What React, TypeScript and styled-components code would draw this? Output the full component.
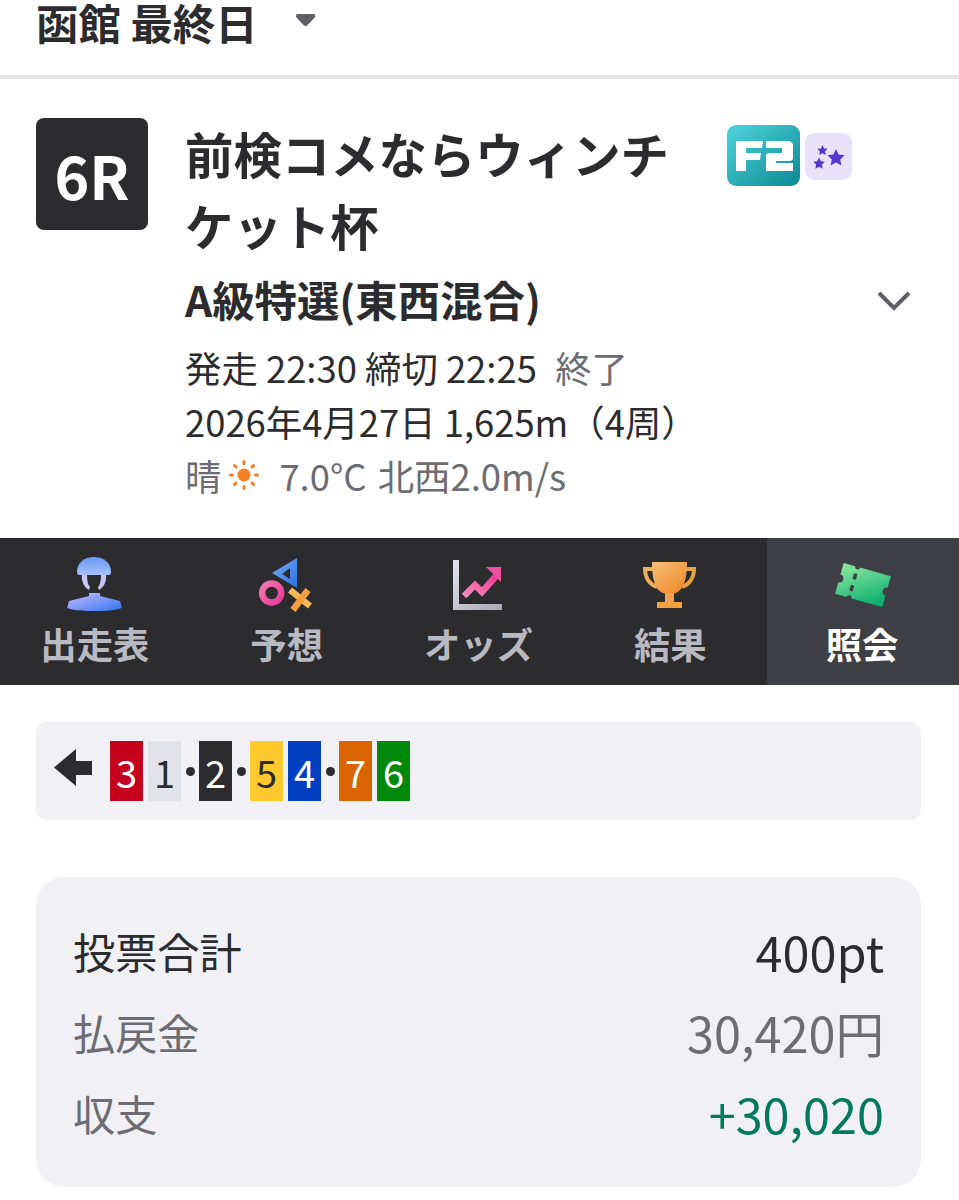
import React from 'react'
import styled, { createGlobalStyle } from 'styled-components'

const GlobalStyle = createGlobalStyle`
	html, body {
		margin: 0;
		padding: 0;
		background: #fff;
		color: #2c2c2e;
		font-family: "Noto Sans CJK JP", "Noto Sans", sans-serif;
		overflow: hidden;
	}
`
const Page = styled.div`
	width: 959px;
	height: 1200px;
	overflow: hidden;
`
const Header = styled.header`
	height: 75px;
	box-sizing: content-box;
	border-bottom: 4px solid #e4e4ee;
	padding-left: 36px;
	display: flex;
	align-items: flex-start;
	gap: 38px;
`
const Venue = styled.h1`
	margin: 0;
	font-size: 42.4px;
	line-height: 44px;
	font-weight: 700;
`
const Caret = styled.span`
	width: 20px;
	height: 12px;
	margin: 14px 0 0 0;
	background: #5f5f66;
	clip-path: polygon(6% 0, 94% 0, 100% 20%, 58% 96%, 50% 100%, 42% 96%, 0 20%);
`
const Race = styled.section`
	height: 459px;
	box-sizing: border-box;
	padding: 39px 36px 0;
	display: flex;
	gap: 37px;
`
const RaceBadge = styled.div`
	flex: none;
	width: 112px;
	height: 112px;
	border-radius: 8px;
	background: #2c2c2e;
	color: #fff;
	font-size: 59px;
	font-weight: 700;
	display: flex;
	align-items: center;
	justify-content: center;
`
const RaceBody = styled.div`
	flex: 1;
	min-width: 0;
	position: relative;
`
const TitleRow = styled.div`
	display: flex;
	align-items: flex-start;
`
const Title = styled.h2`
	margin: -1px 0 1px;
	width: 522px;
	flex: none;
	font-size: 48.4px;
	line-height: 72px;
	font-weight: 700;
`
const Grades = styled.div`
	display: flex;
	align-items: center;
	gap: 4px;
	margin: 7px 0 0 20px;
`
const GradeLine = styled.div`
	font-size: 42.4px;
	line-height: 66px;
	font-weight: 700;
	margin-top: 4px;
`
const Chevron = styled.svg`
	position: absolute;
	right: 11px;
	top: 171px;
`
const Meta = styled.div<{ $muted?: boolean }>`
	font-size: 36.4px;
	line-height: 54px;
	color: ${p => (p.$muted ? '#6c6c72' : '#2c2c2e')};
	white-space: pre;
	display: flex;
	align-items: center;
	word-spacing: ${p => (p.$muted ? '3px' : '0')};
`
const MetaFirst = styled(Meta)`
	margin-top: 8px;
`
const Muted = styled.span`
	color: #6c6c72;
	margin-left: 2px;
`
const SunIcon = styled.svg`
	margin: 0 19px 0 7px;
`
const Tabs = styled.nav`
	height: 147px;
	background: #2c2c2e;
	display: grid;
	grid-template-columns: repeat(5, 1fr);
`
const Tab = styled.div<{ $active?: boolean }>`
	background: ${p => (p.$active ? '#3f4045' : 'transparent')};
	color: ${p => (p.$active ? '#fff' : '#b9b9c1')};
	display: flex;
	flex-direction: column;
	align-items: center;
	padding-top: 17px;
	box-sizing: border-box;
`
const TabIcon = styled.svg`
	display: block;
	width: 60px;
	height: 60px;
`
const TabLabel = styled.span`
	font-size: 36.4px;
	line-height: 44px;
	font-weight: 700;
	margin-top: 6px;
	margin-left: -2px;
`
const Order = styled.div`
	margin: 37px 38px 0 36px;
	height: 98px;
	border-radius: 10px;
	background: #f0f0f5;
	display: flex;
	align-items: center;
	padding-left: 18px;
`
const ArrowIcon = styled.svg`
	margin-right: 18px;
	margin-bottom: 7px;
`
const Bike = styled.span<{ $bg: string; $fg: string }>`
	width: 33px;
	height: 60px;
	margin-right: 5px;
	background: ${p => p.$bg};
	color: ${p => p.$fg};
	font-size: 38px;
	display: flex;
	align-items: center;
	justify-content: center;
`
const Dot = styled.span`
	width: 9px;
	height: 9px;
	border-radius: 50%;
	background: #2c2c2e;
	margin-right: 4px;
`
const Totals = styled.section`
	margin: 57px 38px 0 36px;
	height: 310px;
	box-sizing: border-box;
	border-radius: 28px;
	background: #f0f0f5;
	padding: 36px 37px 0 38px;
`
const TotalRow = styled.div<{ $color: string }>`
	display: flex;
	justify-content: space-between;
	align-items: center;
	height: 81px;
	color: ${p => p.$color};
`
const TotalLabel = styled.span`
	font-size: 42.2px;
	line-height: 62px;
	margin-left: -1px;
	margin-top: -6px;
`
const TotalValue = styled.span<{ $color?: string }>`
	font-size: 48.6px;
	line-height: 70px;
	margin-top: -6px;
	color: ${p => p.$color || 'inherit'};
`

const order: ({ n: string; bg: string; fg: string } | 'dot')[] = [
	{ n: '3', bg: '#c4001c', fg: '#fff' },
	{ n: '1', bg: '#e2e3e8', fg: '#2c2c2e' },
	'dot',
	{ n: '2', bg: '#2c2c2e', fg: '#fff' },
	'dot',
	{ n: '5', bg: '#ffc92e', fg: '#2c2c2e' },
	{ n: '4', bg: '#0040c0', fg: '#fff' },
	'dot',
	{ n: '7', bg: '#d96400', fg: '#fff' },
	{ n: '6', bg: '#008a0c', fg: '#fff' },
]

const F2Logo = () => (
	<svg width="74" height="62" viewBox="0 0 74 62">
		<defs>
			<linearGradient id="f2" x1="0" y1="0" x2="1" y2="1">
				<stop offset="0" stopColor="#4fd3dc" />
				<stop offset="1" stopColor="#0b8a94" />
			</linearGradient>
		</defs>
		<rect width="73" height="61" rx="9" fill="url(#f2)" />
		<path d="M9 16h27l-1 7H19v5h15l-1 7H19v11H9z" fill="#fff" />
		<path d="M39 16h24l3 3v15l-2 2H49v2h17v8H39V30l2-2h14v-5H39z" fill="#fff" />
	</svg>
)

const Stars = () => (
	<svg width="47" height="47" viewBox="0 0 47 47">
		<rect width="47" height="47" rx="9" fill="#e8e2fc" />
		<path d="M31 16l2.600 5.600 6 .7-4.400 4.100 1.200 6-5.400-3-5.400 3 1.200-6-4.400-4.100 6-.7z" fill="#5538d0" />
		<path d="M17.500 12l1.600 3.400 3.700.4-2.700 2.500.7 3.700-3.300-1.800-3.300 1.800.7-3.700-2.700-2.500 3.700-.4z" fill="#5538d0" />
		<path d="M14 24.500l1.800 3.800 4.100.5-3 2.800.8 4.100-3.700-2-3.700 2 .8-4.100-3-2.800 4.100-.5z" fill="#5538d0" />
	</svg>
)

const Sun = () => (
	<SunIcon width="32" height="32" viewBox="0 0 32 32">
		<circle cx="16" cy="16" r="6.500" fill="#f58024" />
		<g stroke="#f58024" strokeWidth="3" strokeLinecap="round">
			<path d="M16 2.500v2M16 27.500v2M2.500 16h2M27.500 16h2M6.500 6.500l1.500 1.500M24 24l1.500 1.500M6.500 25.500l1.500-1.500M24 8l1.500-1.500" />
		</g>
	</SunIcon>
)

const RiderIcon = () => (
	<TabIcon viewBox="0 0 60 60">
		<defs>
			<linearGradient id="rider" x1="0" y1="0" x2="1" y2="1">
				<stop offset="0" stopColor="#c9bcff" />
				<stop offset="1" stopColor="#2f74f0" />
			</linearGradient>
			<linearGradient id="helmet" x1="0" y1="0" x2="0" y2="1">
				<stop offset="0" stopColor="#6497f0" />
				<stop offset="1" stopColor="#a8c0ff" />
			</linearGradient>
		</defs>
		<path d="M11 17c0-9 7-15 17-15s17 6 17 15c0 2-1 3-2 3H13c-1 0-2-1-2-3z" fill="url(#helmet)" />
		<path d="M16 20c-1 7 3 13 7 15l1-3c-2-2-3-6-3-12zM40 20c1 7-3 13-7 15l-1-3c2-2 3-6 3-12z" fill="#c9c6f6" />
		<path d="M23 38h11v3l20 5 2 7c-9 3-18 3-27.500 3S10 56 1 53l2-7 20-5z" fill="url(#rider)" />
	</TabIcon>
)

const SymbolsIcon = () => (
	<TabIcon viewBox="0 0 60 60">
		<defs>
			<linearGradient id="tri" x1="0" y1="0" x2="1" y2="1">
				<stop offset="0" stopColor="#74b0f7" />
				<stop offset="1" stopColor="#2f6fe0" />
			</linearGradient>
			<linearGradient id="ring" x1="0" y1="0" x2="1" y2="1">
				<stop offset="0" stopColor="#f478b0" />
				<stop offset="1" stopColor="#e83a94" />
			</linearGradient>
		</defs>
		<path d="M39 3v30L14 18z M32 13l-8 6 8 5z" fill="url(#tri)" fillRule="evenodd" />
		<circle cx="13.700" cy="38" r="9.500" fill="none" stroke="url(#ring)" strokeWidth="6.500" />
		<path d="M32 35l20 16" stroke="#f5b858" strokeWidth="6.500" fill="none" />
		<path d="M50 35L35 55" stroke="#f5a040" strokeWidth="6.500" fill="none" />
	</TabIcon>
)

const ChartIcon = () => (
	<TabIcon viewBox="0 0 60 60">
		<defs>
			<linearGradient id="axis" x1="0" y1="0" x2="1" y2="1">
				<stop offset="0" stopColor="#e4e4ea" />
				<stop offset="1" stopColor="#a8a8b4" />
			</linearGradient>
			<linearGradient id="trend" x1="0" y1="1" x2="1" y2="0">
				<stop offset="0" stopColor="#f48cb8" />
				<stop offset="1" stopColor="#ee3f96" />
			</linearGradient>
		</defs>
		<path d="M4 5h6v44h43v6H4z" fill="url(#axis)" />
		<path d="M15 41l11-11 7 7 14-16" stroke="url(#trend)" strokeWidth="6.500" fill="none" />
		<path d="M37 12h15v15z" fill="#ee4f9e" />
	</TabIcon>
)

const TrophyIcon = () => (
	<TabIcon viewBox="0 0 60 60">
		<defs>
			<linearGradient id="cup" x1="0" y1="0" x2="1" y2="1">
				<stop offset="0" stopColor="#f8c078" />
				<stop offset="1" stopColor="#ee8424" />
			</linearGradient>
		</defs>
		<path d="M12 14H4c0 8 4 15 12 18" fill="none" stroke="#eeb058" strokeWidth="4" />
		<path d="M45 14h8c0 8-4 15-12 18" fill="none" stroke="#e8a044" strokeWidth="4" />
		<path d="M11 7h35c0 14-2 24-8 29-2 2-5 3-9.500 3s-8-1-10-3C13 31 11 21 11 7z" fill="url(#cup)" />
		<path d="M24 38h9v9h-9z" fill="#f3a050" />
		<path d="M16 47h25v6H16z" fill="#f3a040" />
	</TabIcon>
)

const TicketIcon = () => (
	<TabIcon viewBox="0 0 60 60">
		<defs>
			<linearGradient id="ticket" x1="0" y1="0" x2="1" y2="1">
				<stop offset="0" stopColor="#8fe9a0" />
				<stop offset="1" stopColor="#00a96c" />
			</linearGradient>
		</defs>
		<g transform="rotate(15.500 30 30)">
			<path d="M5.500 14H17.500a2.500 2.500 0 0 0 5 0h32v12a4 4 0 0 0 0 8v12H22.500a2.500 2.500 0 0 0-5 0H5.500V34a4 4 0 0 0 0-8z" fill="url(#ticket)" />
			<path d="M20 21v6M20 33v6" stroke="#3f4045" strokeWidth="3.500" />
		</g>
	</TabIcon>
)

const tabs = [
	{ label: '出走表', icon: <RiderIcon /> },
	{ label: '予想', icon: <SymbolsIcon /> },
	{ label: 'オッズ', icon: <ChartIcon /> },
	{ label: '結果', icon: <TrophyIcon /> },
	{ label: '照会', icon: <TicketIcon />, active: true },
]

const App: React.FC = () => {
	return (
		<Page>
			<GlobalStyle />
			<Header>
				<Venue>函館 最終日</Venue>
				<Caret />
			</Header>
			<Race>
				<RaceBadge>6R</RaceBadge>
				<RaceBody>
					<TitleRow>
						<Title>前検コメならウィンチケット杯</Title>
						<Grades>
							<F2Logo />
							<Stars />
						</Grades>
					</TitleRow>
					<GradeLine>A級特選(東西混合)</GradeLine>
					<Chevron width="36" height="24" viewBox="0 0 36 24" fill="none">
						<path d="M3 4l15 15L33 4" stroke="#5f5f66" strokeWidth="4" />
					</Chevron>
					<MetaFirst>
						発走 22:30 締切 22:25  <Muted>終了</Muted>
					</MetaFirst>
					<Meta>2026年4月27日 1,625m（4周）</Meta>
					<Meta $muted>
						晴
						<Sun />
						7.0°C 北西2.0m/s
					</Meta>
				</RaceBody>
			</Race>
			<Tabs>
				{tabs.map(tab => (
					<Tab key={tab.label} $active={tab.active}>
						{tab.icon}
						<TabLabel>{tab.label}</TabLabel>
					</Tab>
				))}
			</Tabs>
			<Order>
				<ArrowIcon width="38" height="37" viewBox="0 0 38 37">
					<path d="M0 18.500L22 0v12h16v14H22v11z" fill="#2c2c2e" />
				</ArrowIcon>
				{order.map((item, i) =>
					item === 'dot' ? <Dot key={i} /> : <Bike key={i} $bg={item.bg} $fg={item.fg}>{item.n}</Bike>
				)}
			</Order>
			<Totals>
				<TotalRow $color="#2c2c2e">
					<TotalLabel>投票合計</TotalLabel>
					<TotalValue>400pt</TotalValue>
				</TotalRow>
				<TotalRow $color="#6c6c72">
					<TotalLabel>払戻金</TotalLabel>
					<TotalValue>30,420円</TotalValue>
				</TotalRow>
				<TotalRow $color="#6c6c72">
					<TotalLabel>収支</TotalLabel>
					<TotalValue $color="#007a5a">+30,020</TotalValue>
				</TotalRow>
			</Totals>
		</Page>
	)
}

export default App
